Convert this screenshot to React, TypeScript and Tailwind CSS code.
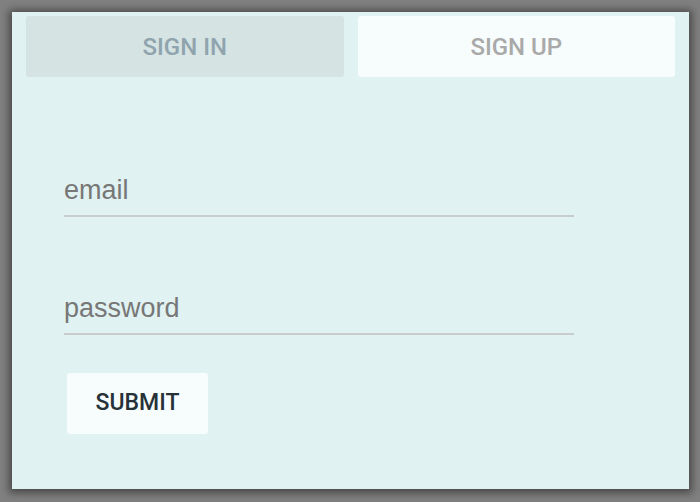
import { useState } from 'react';

export default function App() {
  const [tab, setTab] = useState<'in' | 'up'>('in');
  const [email, setEmail] = useState('');
  const [password, setPassword] = useState('');

  const tabs = [
    { id: 'in' as const, label: 'SIGN IN' },
    { id: 'up' as const, label: 'SIGN UP' },
  ];

  return (
    <div className="min-h-[502px] w-[700px] bg-[#808080] p-[12px] pr-[11px]">
      <div className="flex h-[477px] w-[677px] flex-col bg-[#e0f2f1] px-[14px] pt-[4px] shadow-[0_1px_8px_3px_rgba(0,0,0,0.45)]">
        {/* Tabs */}
        <div className="flex h-[61px] gap-[14px]">
          {tabs.map((t) => (
            <button
              key={t.id}
              onClick={() => setTab(t.id)}
              className={`flex-1 rounded-[3px] font-['Roboto',sans-serif] text-[24px] font-medium ${
                tab === t.id ? 'bg-[#d5e3e3] text-[#90a4ae]' : 'bg-[#f7fcfc] text-[#a9a9a9]'
              }`}
            >
              {t.label}
            </button>
          ))}
        </div>

        {/* Form */}
        <form className="ml-[38px] mt-[93px] flex flex-col" onSubmit={(e) => e.preventDefault()}>
          <input
            type="email"
            value={email}
            onChange={(e) => setEmail(e.target.value)}
            placeholder="email"
            className="h-[47px] w-[510px] border-b-2 border-[#c9cccc] bg-transparent pb-[4px] font-['Liberation_Sans',Arial,sans-serif] text-[27px] text-[#333] outline-none placeholder:text-[#777]"
          />
          <input
            type="password"
            value={password}
            onChange={(e) => setPassword(e.target.value)}
            placeholder="password"
            className="mt-[71px] h-[47px] w-[510px] border-b-2 border-[#c9cccc] bg-transparent pb-[4px] font-['Liberation_Sans',Arial,sans-serif] text-[27px] text-[#333] outline-none placeholder:text-[#777]"
          />
          <button
            type="submit"
            className="ml-[3px] mt-[38px] h-[61px] w-[141px] rounded-[3px] bg-[#f7fcfc] font-['Roboto',sans-serif] text-[23px] font-medium text-[#263238]"
          >
            SUBMIT
          </button>
        </form>
      </div>
    </div>
  );
}
